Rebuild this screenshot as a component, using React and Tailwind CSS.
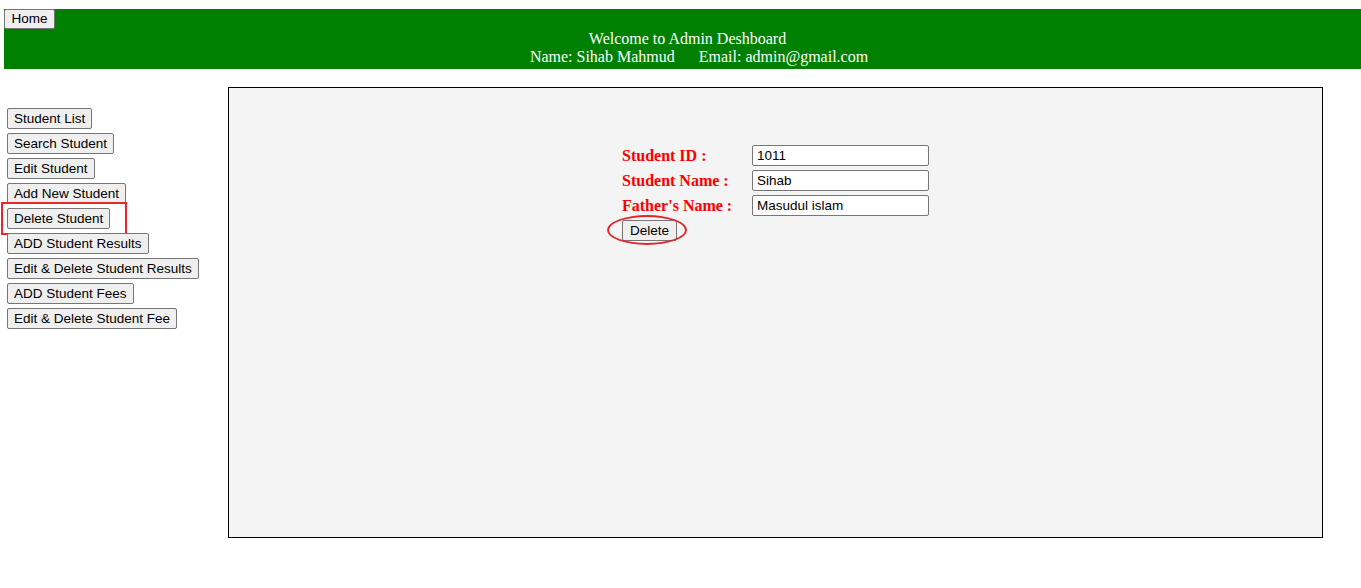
import React from 'react';

const sans = "font-['Liberation_Sans',Arial,sans-serif]";
const serif = "font-['Liberation_Serif','Times_New_Roman',serif]";
const btn = `${sans} block bg-[#efefef] border border-[#767676] rounded-[2px] px-[6px] h-[21px] text-[13.5px] leading-[16px] text-black whitespace-nowrap`;

const menu = [
  'Student List',
  'Search Student',
  'Edit Student',
  'Add New Student',
  'Delete Student',
  'ADD Student Results',
  'Edit & Delete Student Results',
  'ADD Student Fees',
  'Edit & Delete Student Fee',
];

const fields = [
  { label: 'Student ID :', value: '1011' },
  { label: 'Student Name :', value: 'Sihab' },
  { label: "Father's Name :", value: 'Masudul islam' },
];

export default function App() {
  return (
    <div className="min-h-screen bg-white">
      {/* Header */}
      <div className={`${serif} ml-[4px] mt-[9px] h-[60px] bg-[#008000] text-white text-[16px] leading-[18px] flex flex-col`}>
        <div className="flex h-[21px]">
          <button className={`${sans} block bg-[#efefef] border border-[#767676] rounded-[2px] w-[51px] h-[20px] text-[13.5px] leading-[16px] text-black`}>Home</button>
        </div>
        <div className="text-center pl-[10px]">Welcome to Admin Deshboard</div>
        <div className="text-center pl-[33px]">
          <span>Name: Sihab Mahmud</span>
          <span className="ml-[24px]">Email: admin@gmail.com</span>
        </div>
      </div>

      <div className="flex mt-[18px]">
        {/* Sidebar */}
        <div className="w-[228px] pl-[7px] pt-[21px] flex flex-col items-start gap-[4px]">
          {menu.map((m) => (
            <div key={m} className="relative">
              <button className={btn}>{m}</button>
              {m === 'Delete Student' && (
                <div className="absolute left-[-6px] top-[-6px] w-[126px] h-[33px] border-2 border-[#e8262b] pointer-events-none" />
              )}
            </div>
          ))}
        </div>

        {/* Content */}
        <div className="w-[1095px] h-[451px] border border-black bg-[#f4f4f4] flex justify-center pt-[57px]">
          <div className="flex flex-col gap-[4px]">
            {fields.map((f) => (
              <div key={f.label} className="flex items-center h-[21px]">
                <label className={`${serif} w-[130px] font-bold text-[16px] text-[#ff0000]`}>{f.label}</label>
                <input
                  readOnly
                  value={f.value}
                  className={`${sans} w-[177px] h-[21px] bg-white border border-[#767676] rounded-[2px] px-[4px] text-[13.5px] text-black outline-none`}
                />
              </div>
            ))}
            <div className="relative self-start">
              <button className={`${btn} w-[55px] px-0`}>Delete</button>
              <div className="absolute left-[-15px] top-[-5px] w-[80px] h-[30px] rounded-[50%] border-2 border-[#e0262b] pointer-events-none" />
            </div>
          </div>
        </div>
      </div>
    </div>
  );
}
